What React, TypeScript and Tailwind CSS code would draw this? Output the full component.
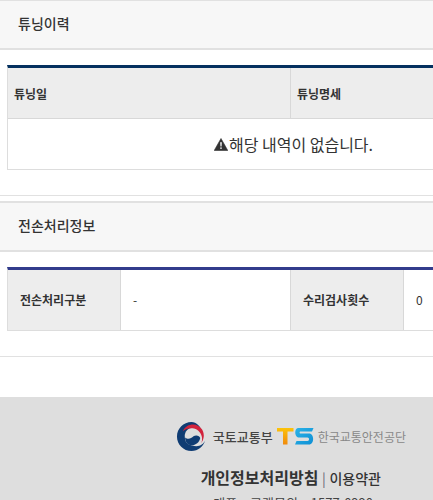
const font = { fontFamily: '"Noto Sans CJK KR", "Noto Sans", sans-serif' }

function SectionTitle({ title }: { title: string }) {
  return (
    <div className="h-[51px] flex items-center pl-[18px] pb-1 bg-[#f7f7f7] border-y-2 border-[#e1e1e1] text-sm font-medium text-[#333]">
      {title}
    </div>
  )
}

function WarningIcon() {
  return (
    <svg viewBox="0 0 14 13" className="w-[14px] h-[13px] shrink-0">
      <path d="M7 0.5L13.8 12.5H0.2Z" fill="#333" stroke="#333" strokeLinejoin="round" strokeWidth="0.6" />
      <path d="M6.2 4.2H7.8L7.5 8.6H6.5Z" fill="#fff" />
      <rect x="6.3" y="9.4" width="1.4" height="1.5" fill="#fff" />
    </svg>
  )
}

function MolitLogo() {
  return (
    <svg viewBox="0 0 32 32" className="w-[31px] h-[31px] shrink-0">
      {/* navy body */}
      <path d="M16 1C7.7 1 1 7.7 1 16s6.7 15 15 15c6.8 0 12.2-4.5 14-10.5-1.5 3-4.5 5.5-9 5.5-6 0-10.5-4-10.5-9.5 0-2.5 1.2-4.5 3-6 2-1.6 4.5-1.7 6.5-1.2 2.5.6 5 1.2 7.5 3C25.5 5.5 21 1 16 1Z" fill="#0f3c73" />
      {/* gray gap and inner swirl */}
      <path d="M9 15.5C9 10.5 13 7 17.5 7c4.5 0 8.5 3.5 8.5 8 0 5.5-4.3 10-10 10-4 0-7-3.5-7-9.500Z" fill="#dedede" />
      <path d="M9.500 17c1.500 1.500 4 1.800 6 .6 2-1.200 3-2.600 5.500-2.600 2 0 3.500 1 4 2.500-.8 4.500-4.500 7.500-9 7.500-4 0-6.800-3.500-6.500-8Z" fill="#0f3c73" />
      {/* red arc */}
      <path d="M7 10.500C9.500 5.500 14 3.500 18 3.700c6.500.4 11 5.800 10.700 11.800-.2 3-1.200 5.200-2.700 7.500 1-2.200 1.200-4.800.6-7-1.200-4.800-5-8.200-9.600-8.500C13 7.200 9.500 8.300 7 10.500Z" fill="#d2233c" />
    </svg>
  )
}

function TsLogo() {
  return (
    <svg viewBox="0 0 37 17" className="w-[37px] h-[17px] shrink-0">
      <defs>
        <linearGradient id="ts-t" x1="0" y1="0" x2="0" y2="1">
          <stop offset="0" stopColor="#fcc30a" />
          <stop offset="1" stopColor="#f08a0c" />
        </linearGradient>
        <linearGradient id="ts-s" x1="0" y1="0" x2="1" y2="1">
          <stop offset="0" stopColor="#2bb3e8" />
          <stop offset="1" stopColor="#0e8fd4" />
        </linearGradient>
      </defs>
      <path d="M0 0H16.500V3.500H10.500V16.500H6V3.500H0Z" fill="url(#ts-t)" />
      <path d="M21.500 0H36.500L35 3.500H23.500C22.300 3.500 22.300 5.500 23.500 5.500H32C37.500 5.500 37.500 16.500 32 16.500H18L19.500 13H30.500C32.500 13 32.500 9.500 30.500 9.500H22.500C17 9.500 17 0 21.500 0Z" fill="url(#ts-s)" />
    </svg>
  )
}

export default function App() {
  return (
    <div style={font} className="w-[433px] h-[500px] overflow-hidden bg-white">
      <div className="-mt-px">
        <SectionTitle title="튜닝이력" />
      </div>

      <div className="mt-[15px] ml-[7px] w-[572px] border-t-[3px] border-t-[#04305f] border-l border-[#ddd]">
        <div className="flex h-[51px] pt-0.5 bg-[#ededed] border-b border-[#d8d8d8] text-xs font-bold text-[#333]">
          <div className="w-[283px] -mt-0.5 pt-0.5 flex items-center pl-[6px] border-r border-[#d8d8d8]">튜닝일</div>
          <div className="flex-1 flex items-center pl-[6px]">튜닝명세</div>
        </div>
        <div className="h-[51px] flex items-center justify-center border-b border-[#ddd] text-base text-[#333]">
          <WarningIcon />
          <span className="ml-px">해당 내역이 없습니다.</span>
        </div>
      </div>

      <div className="mt-[25px] border-t border-[#e1e1e1]" />
      <div className="mt-[5px]">
        <SectionTitle title="전손처리정보" />
      </div>

      <div className="mt-[15px] ml-[7px] border-t-[3px] border-t-[#323c8c] border-l border-[#ddd]">
        <div className="flex h-[61px] border-b border-[#ddd] text-xs text-[#333]">
          <div className="w-[113px] flex items-center pl-3 bg-[#ededed] border-r border-[#d8d8d8] font-bold">전손처리구분</div>
          <div className="w-[170px] flex items-center pl-3 border-r border-[#d8d8d8]">-</div>
          <div className="w-[113px] flex items-center pl-3 bg-[#ededed] border-r border-[#d8d8d8] font-bold">수리검사횟수</div>
          <div className="flex-1 flex items-center pl-3">0</div>
        </div>
      </div>

      <div className="mt-[25px] border-t border-[#e1e1e1]" />

      <div className="mt-10 h-[103px] bg-[#dedede] flex flex-col items-end">
        <div className="mt-6 mr-[27px] flex items-center">
          <MolitLogo />
          <span className="ml-1.5 text-[13px] font-medium text-[#444]">국토교통부</span>
          <span className="ml-[4px]">
            <TsLogo />
          </span>
          <span className="ml-[4px] text-xs text-[#888]">한국교통안전공단</span>
        </div>
        <div className="mt-[13px] mr-[52px] text-base font-bold text-[#333] whitespace-nowrap">
          개인정보처리방침 <span className="text-sm font-normal text-[#667]">|</span> <span className="text-sm font-medium">이용약관</span>
        </div>
        <div className="mt-1 mr-[60px] text-[13px] text-[#444] whitespace-nowrap [word-spacing:10px]">대표 고객문의 1577-0990</div>
      </div>
    </div>
  )
}
